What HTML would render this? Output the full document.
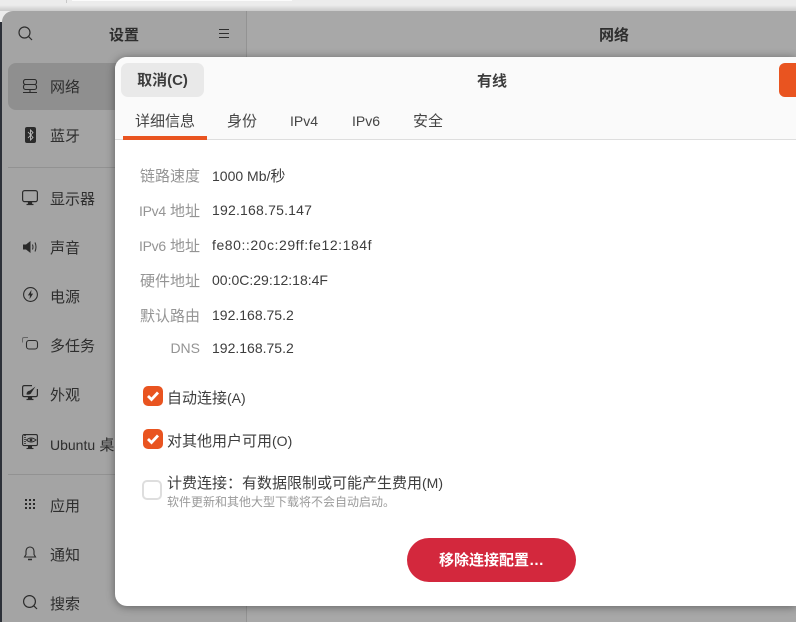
<!DOCTYPE html>
<html lang="zh">
<head>
<meta charset="utf-8">
<style>
html,body{margin:0;padding:0;width:796px;height:622px;overflow:hidden;background:#ececec}
body{position:relative;font-family:"Liberation Sans","Noto Sans CJK SC",sans-serif;font-size:14px;color:#3d3d3d}
.a{position:absolute;white-space:nowrap;line-height:20px}
.z{font-size:15px}
.n{font-size:14px}
svg{position:absolute;overflow:visible}
#top{position:absolute;left:72px;top:0;width:220px;height:1px;background:#fbfbfb}
#topl{position:absolute;left:66px;top:0;width:1px;height:3px;background:#c8c8c8}
#topg{position:absolute;left:0;top:5px;width:796px;height:6px;background:linear-gradient(rgba(0,0,0,0),rgba(0,0,0,.14))}
#strip{position:absolute;left:0;top:22px;width:2px;height:600px;background:#2c3038}
#side{position:absolute;left:2px;top:11px;width:245px;height:611px;background:#a4a4a4;border-radius:11px 0 0 0}
#vline{position:absolute;left:246px;top:11px;width:1px;height:611px;background:#939393}
#head{position:absolute;left:247px;top:11px;width:549px;height:611px;background:#a8a8a8}
#sel{position:absolute;left:8px;top:63px;width:120px;height:47px;background:#8f8f8f;border-radius:8px}
.sep{position:absolute;left:8px;width:107px;height:1px;background:#929292}
.s{left:50px;color:#2e2e2e;font-size:15px}
#dlg{position:absolute;left:115px;top:57px;width:681px;height:549px;background:#fff;border-radius:12px 0 0 12px;box-shadow:0 1px 9px rgba(0,0,0,.42)}
#dhead{position:absolute;left:115px;top:57px;width:681px;height:83px;background:#fafafa;border-radius:12px 0 0 0;border-bottom:1px solid #dedede;box-sizing:border-box}
#cancel{position:absolute;left:121px;top:63px;width:83px;height:34px;background:#e9e9e9;border-radius:7px;text-align:center;line-height:36px;font-weight:700;font-size:15px;color:#3d3d3d}
#save{position:absolute;left:779px;top:63px;width:17px;height:34px;background:#e95420;border-radius:6px 0 0 6px}
#ul{position:absolute;left:123px;top:136px;width:84px;height:4px;background:#e95420}
.t{top:112px;font-size:15px;color:#444}
.l{color:#949494;font-size:15px;width:62px;left:138px;text-align:right}
.l i{font-style:normal;font-size:14px;letter-spacing:-.3px}
.v{left:212px;color:#3d3d3d;font-size:14px}
.c{position:absolute;left:143px;width:20px;height:20px;background:#e95420;border-radius:5px}
.c svg{left:0;top:0}
#un{position:absolute;left:142px;top:480px;width:16px;height:16px;background:#fff;border:2px solid #dedede;border-radius:5px}
#rm{position:absolute;left:407px;top:538px;width:169px;height:44px;background:#d3283d;border-radius:22px;color:#fff;text-align:center;line-height:46px;font-weight:700;font-size:15px}
</style>
</head>
<body>
<div id="top"></div>
<div id="topl"></div>
<div id="topg"></div>
<div id="strip"></div>
<div id="side"></div>
<div id="head"></div>
<div id="vline"></div>
<div id="sel"></div>
<div class="sep" style="top:167px"></div>
<div class="sep" style="top:474px"></div>

<svg style="left:18px;top:26px" width="16" height="16" viewBox="0 0 16 16" fill="none" stroke="#2e2e2e" stroke-width="1.2"><circle cx="6.500" cy="6.500" r="5.500"/><path d="M10.500 10.500L14 14"/></svg>
<div class="a z" style="left:109px;top:26px;font-weight:700;color:#2e2e2e">设置</div>
<svg style="left:219px;top:29px" width="11" height="10" viewBox="0 0 11 10" stroke="#2e2e2e" stroke-width="1"><path d="M0 .5H10M0 4.500H10M0 8.500H10"/></svg>
<div class="a z" style="left:599px;top:26px;font-weight:700;color:#2e2e2e">网络</div>

<svg style="left:23px;top:79px" width="14" height="15" viewBox="0 0 14 15" fill="none" stroke="#2b2b2b" stroke-width="1.100"><rect x=".5" y=".5" width="13" height="5" rx="2"/><rect x=".5" y="5.500" width="13" height="5" rx="2"/><path d="M0 13.500H14M7 10.500V13.500"/></svg>
<div class="a s" style="top:78px">网络</div>
<svg style="left:25px;top:127px" width="11" height="16" viewBox="0 0 11 16"><rect width="11" height="16" rx="2" fill="#2b2b2b"/><path d="M3 5L8 10.500L5.500 13V3L8 5.500L3 11" fill="none" stroke="#bbb" stroke-width=".9"/></svg>
<div class="a s" style="top:127px">蓝牙</div>

<svg style="left:22px;top:190px" width="16" height="16" viewBox="0 0 16 16" fill="none" stroke="#2b2b2b" stroke-width="1.200"><rect x=".6" y=".6" width="14.800" height="11" rx="2"/><path d="M6.500 12.500H9.500V14H6.500Z" fill="#2b2b2b"/><path d="M4.500 14.500H11.500"/></svg>
<div class="a s" style="top:190px">显示器</div>
<svg style="left:23px;top:240px" width="15" height="14" viewBox="0 0 15 14" fill="none"><path d="M0 4.500H3L7.500 1V13L3 9.500H0Z" fill="#2b2b2b"/><path d="M9.500 4.500Q10.500 7 9.500 9.500M12 2.500Q14 7 12 11.500" stroke="#2b2b2b" stroke-width="1"/></svg>
<div class="a s" style="top:239px">声音</div>
<svg style="left:23px;top:287px" width="15" height="15" viewBox="0 0 15 15" fill="none"><circle cx="7.500" cy="7.500" r="6.900" stroke="#2b2b2b" stroke-width="1.100"/><path d="M8.500 2.800L4.900 8.400H7L6.500 12.200L10.100 6.600H8Z" fill="#2b2b2b"/></svg>
<div class="a s" style="top:288px">电源</div>
<svg style="left:22px;top:337px" width="16" height="14" viewBox="0 0 16 14" fill="none" stroke="#2b2b2b"><path d="M.5 5.500V2Q.5.500 2 .5H6" stroke="#666" stroke-width="1"/><rect x="4.500" y="3.500" width="11" height="8.500" rx="2.500" stroke-width="1.100"/></svg>
<div class="a s" style="top:337px">多任务</div>
<svg style="left:22px;top:385px" width="16" height="16" viewBox="0 0 16 16" fill="none" stroke="#2b2b2b" stroke-width="1.200"><path d="M10 .6H2.500Q.6.600.6 2.500V9.700Q.6 11.600 2.500 11.600H13.500Q15.400 11.600 15.400 9.700V4"/><path d="M6.500 12.500H9.500V14H6.500Z" fill="#2b2b2b"/><path d="M4.500 14.500H11.500"/><path d="M4.500 9.500Q4.500 6 8 5.500L13.500 1.500L9.500 7.500Q9 10 4.500 9.500Z" fill="#2b2b2b" stroke="none"/></svg>
<div class="a s" style="top:386px">外观</div>
<svg style="left:22px;top:434px" width="16" height="16" viewBox="0 0 16 16" fill="none" stroke="#2b2b2b" stroke-width="1.100"><rect x=".6" y=".6" width="14.800" height="11" rx="1.500"/><path d="M3 1V11" stroke-width="1.500" stroke-dasharray="1 1"/><path d="M4.500 6Q9 2 14 6Q9 10 4.500 6Z" stroke-width="1"/><circle cx="9" cy="6" r="1.400" fill="#2b2b2b" stroke="none"/><path d="M6.500 12.500H9.500V14H6.500Z" fill="#2b2b2b"/><path d="M4.500 14.500H11.500"/></svg>
<div class="a s" style="top:435px"><span class="n">Ubuntu</span> 桌面</div>

<svg style="left:25px;top:499px" width="11" height="11" viewBox="0 0 11 11" fill="#2b2b2b"><rect x="0" y="0" width="2" height="2"/><rect x="4" y="0" width="2" height="2"/><rect x="8" y="0" width="2" height="2"/><rect x="0" y="4" width="2" height="2"/><rect x="4" y="4" width="2" height="2"/><rect x="8" y="4" width="2" height="2"/><rect x="0" y="8" width="2" height="2"/><rect x="4" y="8" width="2" height="2"/><rect x="8" y="8" width="2" height="2"/></svg>
<div class="a s" style="top:497px">应用</div>
<svg style="left:24px;top:546px" width="12" height="15" viewBox="0 0 12 15" fill="none" stroke="#2b2b2b" stroke-width="1.100"><path d="M.5 11H11.500L10 8.500V5A4 4 0 0 0 2 5V8.500Z"/><path d="M4 13.500H8" stroke-width="1.500"/></svg>
<div class="a s" style="top:546px">通知</div>
<svg style="left:23px;top:595px" width="15" height="15" viewBox="0 0 15 15" fill="none" stroke="#2b2b2b" stroke-width="1.200"><circle cx="6.500" cy="6.500" r="5.900"/><path d="M10.800 10.800L14 14"/></svg>
<div class="a s" style="top:595px">搜索</div>

<div id="dlg"></div>
<div id="dhead"></div>
<div id="cancel">取消(C)</div>
<div id="save"></div>
<div class="a z" style="left:477px;top:72px;font-weight:700;color:#3d3d3d">有线</div>
<div class="a t" style="left:135px">详细信息</div>
<div class="a t" style="left:227px">身份</div>
<div class="a t" style="left:290px;top:111px;font-size:14px">IPv4</div>
<div class="a t" style="left:352px;top:111px;font-size:14px">IPv6</div>
<div class="a t" style="left:413px">安全</div>
<div id="ul"></div>

<div class="a l" style="top:167px">链路速度</div><div class="a v" style="top:166px">1000 Mb/<span class="z">秒</span></div>
<div class="a l" style="top:201px"><i>IPv4</i> 地址</div><div class="a v" style="top:200px;letter-spacing:.2px">192.168.75.147</div>
<div class="a l" style="top:236px"><i>IPv6</i> 地址</div><div class="a v" style="top:235px;letter-spacing:.55px">fe80::20c:29ff:fe12:184f</div>
<div class="a l" style="top:272px">硬件地址</div><div class="a v" style="top:270px">00:0C:29:12:18:4F</div>
<div class="a l" style="top:307px">默认路由</div><div class="a v" style="top:305px">192.168.75.2</div>
<div class="a l" style="top:338px;font-size:14px">DNS</div><div class="a v" style="top:338px">192.168.75.2</div>

<div class="c" style="top:386px"><svg width="20" height="20" viewBox="0 0 20 20" fill="none" stroke="#fff" stroke-width="2.800"><path d="M5 10L8.500 13.500L15 6.500"/></svg></div>
<div class="a z" style="left:167px;top:388px">自动连接<span class="n">(A)</span></div>
<div class="c" style="top:429px"><svg width="20" height="20" viewBox="0 0 20 20" fill="none" stroke="#fff" stroke-width="2.800"><path d="M5 10L8.500 13.500L15 6.500"/></svg></div>
<div class="a z" style="left:167px;top:431px">对其他用户可用<span class="n">(O)</span></div>
<div id="un"></div>
<div class="a z" style="left:167px;top:473px">计费连接：有数据限制或可能产生费用<span class="n">(M)</span></div>
<div class="a" style="left:167px;top:492px;font-size:12px;color:#9a9a9a">软件更新和其他大型下载将不会自动启动。</div>
<div id="rm">移除连接配置…</div>
</body>
</html>
